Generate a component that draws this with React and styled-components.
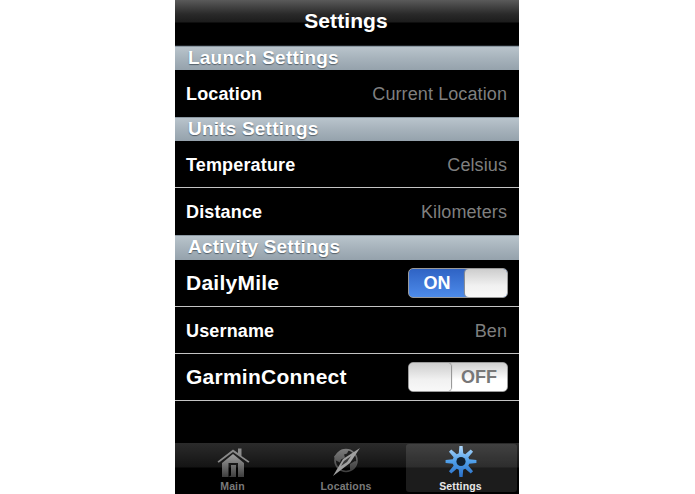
import React from "react";
import styled, { createGlobalStyle } from "styled-components";

const Global = createGlobalStyle`
  html, body { margin: 0; padding: 0; background: #fff; }
  body { font-family: "Liberation Sans", Arial, sans-serif; }
`;
const Page = styled.div`
  width: 695px; height: 494px; display: flex; padding-left: 175px; box-sizing: border-box; overflow: hidden;
`;
const Phone = styled.div`
  width: 344px; height: 494px; background: #000; display: flex; flex-direction: column;
`;
const NavBar = styled.header`
  height: 46px; flex: none; display: flex; align-items: center; justify-content: center; box-sizing: border-box; padding: 0 2px 3px 0;
  background: linear-gradient(#5a5a5a 0, #2a2a2a 14px, #1c1c1c 22px, #000 23px);
  border-bottom: 1px solid #1e2226;
  color: #fff; font-size: 21px; font-weight: 700; letter-spacing: .1px;
  text-shadow: 0 -1px 0 #222;
`;
const Content = styled.main`
  flex: 1; display: flex; flex-direction: column; min-height: 0;
`;
const SectionHeader = styled.div`
  height: ${(p) => (p.$tall ? "25px" : "24px")}; flex: none; box-sizing: border-box; padding: 0 0 2px 13px; display: flex; align-items: center;
  background: linear-gradient(#b9c4cc 0, #a6b2bb 50%, #95a2ac 100%);
  border-top: 1px solid #8b98a2;
  color: #fff; font-size: 19px; font-weight: 700; letter-spacing: .2px;
  text-shadow: 0 1px 1px #55606a;
`;
const Row = styled.div`
  height: 47px; flex: none; box-sizing: border-box; display: flex; align-items: center; justify-content: space-between;
  padding: ${(p) => (p.$toggle ? "0" : p.$divider ? "2px" : "1px")} 11px 0 11px;
  border-bottom: ${(p) => (p.$divider ? "1px solid #c4c4c4" : "none")};
`;
const Label = styled.span`
  color: #fff; font-weight: 700; font-size: ${(p) => (p.$large ? "21px" : "18px")}; letter-spacing: ${(p) => (p.$large ? ".25px" : ".15px")};
`;
const Value = styled.span`
  color: #7f7f7f; font-size: 18px; letter-spacing: .1px; margin-right: 1px;
`;
const Switch = styled.div`
  width: 100px; height: 30px; box-sizing: border-box; border-radius: 5px; display: flex; overflow: hidden;
  flex-direction: ${(p) => (p.$on ? "row" : "row-reverse")};
  border: 1px solid #9a9a9a;
  background: ${(p) => (p.$on ? "linear-gradient(#2f63c4, #4d8bea)" : "linear-gradient(#cfcfcf, #ffffff 60%)")};
`;
const SwitchText = styled.span`
  flex: 1; display: flex; align-items: center; justify-content: center; font-weight: 700; font-size: 18px;
  color: ${(p) => (p.$on ? "#fff" : "#777")};
`;
const Knob = styled.span`
  width: 42px; flex: none; box-sizing: border-box; border-radius: 4px;
  background: linear-gradient(#cdcdcd, #f1f1f1 60%, #f8f8f8);
  box-shadow: 0 0 1px 1px #8f8f8f;
`;
const TabBar = styled.nav`
  height: 51px; flex: none; box-sizing: border-box; padding: 1px 2px 2px 0; display: grid; grid-template-columns: 115px 112px 115px;
  background: linear-gradient(#2b2b2b 0, #141414 24px, #000 25px);
`;
const Tab = styled.div`
  display: flex; flex-direction: column; align-items: center; border-radius: 3px; padding-top: 2px;
  margin-left: ${(p) => (p.$active ? "4px" : "0")};
  padding-right: ${(p) => (p.$active ? "2px" : "0")};
  background: ${(p) => (p.$active ? "rgba(255,255,255,.11)" : "transparent")};
  color: ${(p) => (p.$active ? "#e8e8e8" : "#7a7a7a")};
  font-size: 10.5px; font-weight: 700; letter-spacing: .15px;
`;
const TabIcon = styled.svg`
  width: 34px; height: 31px; flex: none; margin-bottom: 3px;
`;

const Home = () => (
  <TabIcon viewBox="0 0 34 31">
    <defs>
      <linearGradient id="g" x1="0" y1="0" x2="0" y2="1">
        <stop offset="0" stopColor="#a0a0a0" />
        <stop offset="1" stopColor="#3e3e3e" />
      </linearGradient>
    </defs>
    <path fill="#8a8a8a" d="M1.5 15.5 17 3.5l5 3.5V2.5h3.5v7.5l8 5.5-1.2 1.2L17 6 2.7 16.7z" />
    <path fill="url(#g)" fillRule="evenodd" d="M6 17 17 8l11 9V31H6zM12.5 17V31l2.5-1.5V19h5V31H22V17z" />
  </TabIcon>
);
const Globe = () => (
  <TabIcon viewBox="0 0 34 31">
    <defs>
      <linearGradient id="c" x1="0" y1="0" x2="0" y2="1">
        <stop offset="0" stopColor="#7c7c7c" />
        <stop offset="1" stopColor="#404040" />
      </linearGradient>
    </defs>
    <circle cx="17" cy="14.5" r="11" fill="none" stroke="url(#c)" strokeWidth="1.6" />
    <path fill="url(#c)" d="M9 6.5c3-3 7-4 11-3l-2 4-3 1 1 3-4 2-1 3-4-2-2-4zM21 18l5-3 2 1-3 7-4 1z" />
    <path fill="#a0a0a0" d="M31 2 21 17 4 30 14 13z" />
    <path fill="#3a3a3a" d="M22 10 15 15l-3 5 6-4z" />
  </TabIcon>
);
const Gear = () => {
  const teeth = [0, 45, 90, 135, 180, 225, 270, 315];
  return (
    <TabIcon viewBox="0 0 34 31">
      <defs>
        <linearGradient id="b" x1="0" y1="0" x2="0" y2="1">
          <stop offset="0" stopColor="#b2dafb" />
          <stop offset=".5" stopColor="#4f9fea" />
          <stop offset="1" stopColor="#2a6fc6" />
        </linearGradient>
      </defs>
      <path
        fill="url(#b)"
        d={
          teeth
            .map((a) => {
              const r = (d) => ((a + d - 90) * Math.PI) / 180;
              const pt = (R, d) => `${(17 + R * Math.cos(r(d))).toFixed(2)} ${(15.5 + R * Math.sin(r(d))).toFixed(2)}`;
              return `${a === 0 ? "M" : "L"}${pt(8.5, -15)} L${pt(15.5, -6)} L${pt(15.5, 6)} L${pt(8.5, 15)}`;
            })
            .join(" ") + " Z"
        }
      />
      <circle cx="17" cy="15.5" r="4.6" fill="#10202f" />
    </TabIcon>
  );
};

export default function App() {
  return (
    <Page>
      <Global />
      <Phone>
        <NavBar>Settings</NavBar>
        <Content>
          <SectionHeader>Launch Settings</SectionHeader>
          <Row><Label>Location</Label><Value>Current Location</Value></Row>
          <SectionHeader>Units Settings</SectionHeader>
          <Row $divider><Label>Temperature</Label><Value>Celsius</Value></Row>
          <Row><Label>Distance</Label><Value>Kilometers</Value></Row>
          <SectionHeader $tall>Activity Settings</SectionHeader>
          <Row $divider $toggle>
            <Label $large>DailyMile</Label>
            <Switch $on><SwitchText $on>ON</SwitchText><Knob $on /></Switch>
          </Row>
          <Row $divider><Label>Username</Label><Value>Ben</Value></Row>
          <Row $divider $toggle>
            <Label $large>GarminConnect</Label>
            <Switch><SwitchText>OFF</SwitchText><Knob /></Switch>
          </Row>
        </Content>
        <TabBar>
          <Tab><Home />Main</Tab>
          <Tab><Globe />Locations</Tab>
          <Tab $active><Gear />Settings</Tab>
        </TabBar>
      </Phone>
    </Page>
  );
}
